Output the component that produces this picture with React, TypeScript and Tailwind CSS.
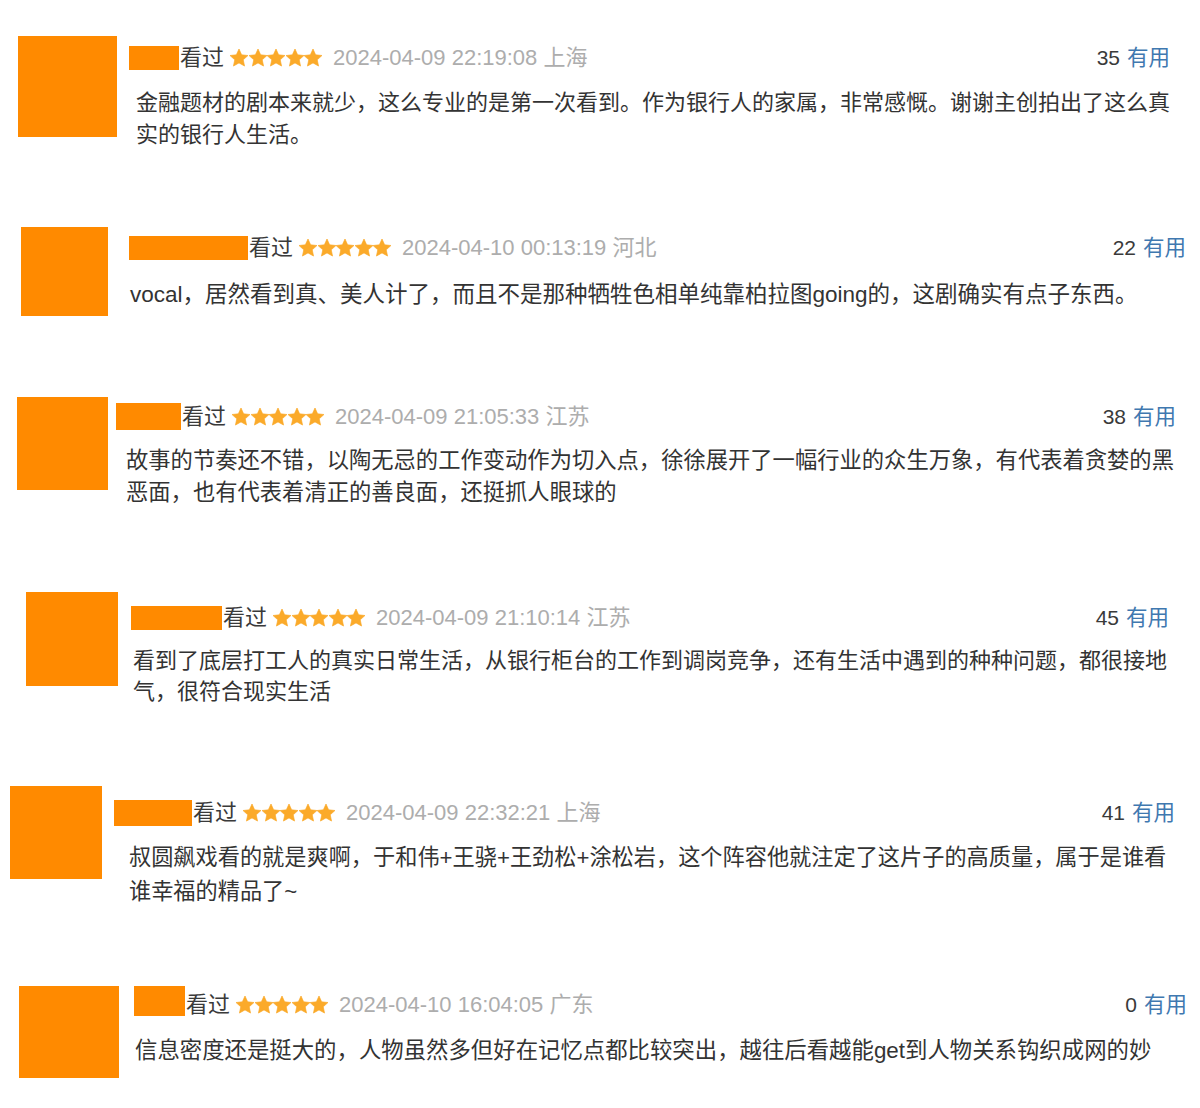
import React from 'react';

interface Review {
  block: string;
  avatar: string;
  col: string;
  name: string;
  header: string;
  date: string;
  count: number;
  body: string;
  lines: string[];
}

const reviews: Review[] = [
  {
    block: 'h-[191px] pl-[18px]',
    avatar: 'w-[99px] h-[101px]',
    col: 'ml-[12px] mt-[10px] w-[1041px]',
    name: 'w-[50px] h-[24px]',
    header: 'h-[24px]',
    date: '2024-04-09 22:19:08 上海',
    count: 35,
    body: 'mt-[17px] pl-[7px] text-[22px] leading-[32px]',
    lines: [
      '金融题材的剧本来就少，这么专业的是第一次看到。作为银行人的家属，非常感慨。谢谢主创拍出了这么真',
      '实的银行人生活。',
    ],
  },
  {
    block: 'h-[170px] pl-[21px]',
    avatar: 'w-[87px] h-[89px]',
    col: 'ml-[21px] mt-[9px] w-[1057px]',
    name: 'w-[119px] h-[24px]',
    header: 'h-[24px]',
    date: '2024-04-10 00:13:19 河北',
    count: 22,
    body: 'mt-[19px] pl-[1px] text-[22.5px] leading-[32px]',
    lines: ['vocal，居然看到真、美人计了，而且不是那种牺牲色相单纯靠柏拉图going的，这剧确实有点子东西。'],
  },
  {
    block: 'h-[195px] pl-[17px]',
    avatar: 'w-[91px] h-[93px]',
    col: 'ml-[8px] mt-[6px] w-[1060px]',
    name: 'w-[65px] h-[27px]',
    header: 'h-[27px]',
    date: '2024-04-09 21:05:33 江苏',
    count: 38,
    body: 'mt-[15px] pl-[10px] text-[22.3px] leading-[32px]',
    lines: [
      '故事的节奏还不错，以陶无忌的工作变动作为切入点，徐徐展开了一幅行业的众生万象，有代表着贪婪的黑',
      '恶面，也有代表着清正的善良面，还挺抓人眼球的',
    ],
  },
  {
    block: 'h-[194px] pl-[26px]',
    avatar: 'w-[92px] h-[94px]',
    col: 'ml-[13px] mt-[14px] w-[1038px]',
    name: 'w-[91px] h-[24px]',
    header: 'h-[24px]',
    date: '2024-04-09 21:10:14 江苏',
    count: 45,
    body: 'mt-[15px] pl-[2px] text-[22px] leading-[31px]',
    lines: [
      '看到了底层打工人的真实日常生活，从银行柜台的工作到调岗竞争，还有生活中遇到的种种问题，都很接地',
      '气，很符合现实生活',
    ],
  },
  {
    block: 'h-[200px] pl-[10px]',
    avatar: 'w-[92px] h-[93px]',
    col: 'ml-[12px] mt-[14px] w-[1061px]',
    name: 'w-[78px] h-[26px]',
    header: 'h-[26px]',
    date: '2024-04-09 22:32:21 上海',
    count: 41,
    body: 'mt-[15px] pl-[15px] text-[22.2px] leading-[34px]',
    lines: [
      '叔圆飙戏看的就是爽啊，于和伟+王骁+王劲松+涂松岩，这个阵容他就注定了这片子的高质量，属于是谁看',
      '谁幸福的精品了~',
    ],
  },
  {
    block: 'h-[122px] pl-[19px]',
    avatar: 'w-[100px] h-[92px]',
    col: 'ml-[15px] mt-0 w-[1053px]',
    name: 'w-[51px] h-[30px]',
    header: 'h-[30px] pt-[8px]',
    date: '2024-04-10 16:04:05 广东',
    count: 0,
    body: 'mt-[19px] pl-[1px] text-[22.4px] leading-[32px]',
    lines: ['信息密度还是挺大的，人物虽然多但好在记忆点都比较突出，越往后看越能get到人物关系钩织成网的妙'],
  },
];

function Stars() {
  return (
    <div className="flex items-center gap-[0.5px] ml-[6px]">
      {[0, 1, 2, 3, 4].map((i) => (
        <svg key={i} width="18" height="18" viewBox="1.5 1.5 21 21">
          <polygon
            points="12,1.5 15.06,8.29 22.46,9.1 16.95,14.1 18.47,21.4 12,17.7 5.53,21.4 7.05,14.1 1.54,9.1 8.94,8.29"
            fill="#fbaa2a"
            stroke="#fbaa2a"
            strokeWidth="0.8"
            strokeLinejoin="round"
          />
        </svg>
      ))}
    </div>
  );
}

function ReviewItem({ r }: { r: Review }) {
  return (
    <div className={`flex items-start ${r.block}`}>
      <div className={`bg-[#ff8a00] shrink-0 ${r.avatar}`} />
      <div className={`flex flex-col shrink-0 ${r.col}`}>
        <div className="flex items-start">
          <div className={`bg-[#ff8a00] shrink-0 ${r.name}`} />
          <div className={`flex items-center flex-1 ${r.header}`}>
            <span className="ml-[1px] text-[22px] leading-[24px] text-[#3a3a3a]">看过</span>
            <Stars />
            <span className="ml-[11px] text-[22px] leading-[24px] text-[#adadad]">{r.date}</span>
            <span className="ml-auto text-[21px] leading-[24px] text-[#3a3a3a]">{r.count}</span>
            <span className="ml-[7px] text-[21.5px] leading-[24px] text-[#3f78b0]">有用</span>
          </div>
        </div>
        <div className={`text-[#333333] ${r.body}`}>
          {r.lines.map((l, i) => (
            <div key={i} className="whitespace-nowrap">
              {l}
            </div>
          ))}
        </div>
      </div>
    </div>
  );
}

export default function App() {
  return (
    <div
      className="w-[1200px] h-[1108px] bg-white pt-[36px] overflow-hidden"
      style={{ fontFamily: '"Liberation Sans", "Noto Sans CJK SC", sans-serif' }}
    >
      {reviews.map((r, i) => (
        <ReviewItem key={i} r={r} />
      ))}
    </div>
  );
}
